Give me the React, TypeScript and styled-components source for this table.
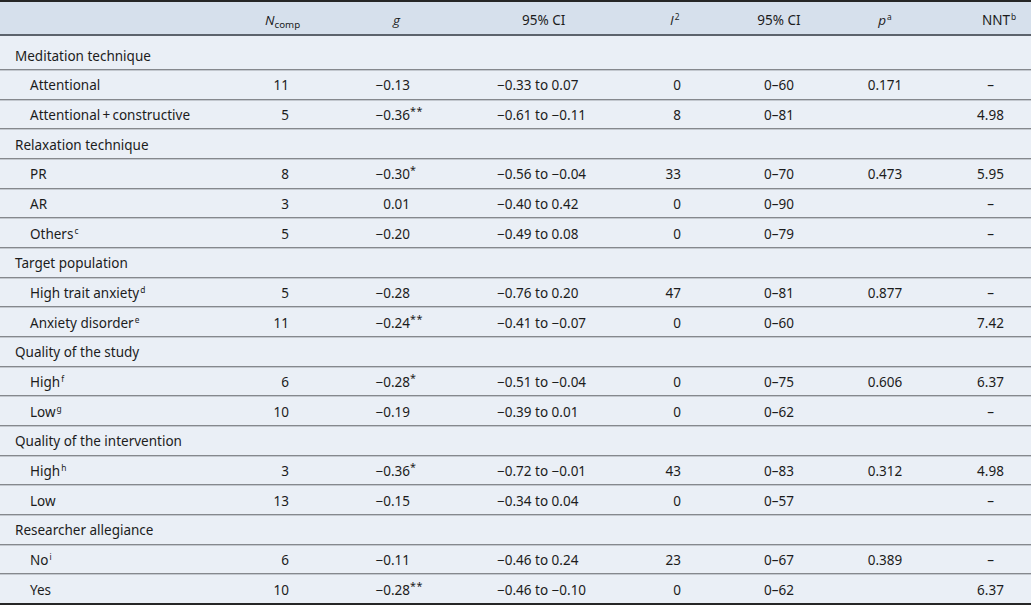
import React from "react";
import styled, { createGlobalStyle } from "styled-components";

const Global = createGlobalStyle`
  html, body { margin: 0; padding: 0; background: #eaeff6; }
  body { font-family: "Noto Sans", "Open Sans", sans-serif; }
`;

const Table = styled.table`
  width: 1031px;
  table-layout: fixed;
  border-collapse: separate;
  border-spacing: 0;
  background: #eaeff6;
  color: #1c1c1c;
  font-family: "Noto Sans", "Open Sans", sans-serif;
  font-size: 13.5px;
`;

const HeadCell = styled.th<{ $pl?: number; $pr?: number; $align?: "left" | "center" | "right" }>`
  box-sizing: border-box;
  height: 36px;
  padding: 4px ${(p) => p.$pr ?? 0}px 0 ${(p) => p.$pl ?? 0}px;
  text-align: ${(p) => p.$align ?? "left"};
  font-weight: 400;
  white-space: nowrap;
  background: #d6e0ec;
  border-top: 2px solid #262626;
  border-bottom: 2px solid #5c636c;
  vertical-align: middle;
`;

const Cell = styled.td<{
  $align?: "left" | "center" | "right";
  $pl?: number;
  $pr?: number;
  $first?: boolean;
  $last?: boolean;
}>`
  box-sizing: border-box;
  height: ${(p) => (p.$first ? "34px" : p.$last ? "31px" : "29.67px")};
  padding: ${(p) => (p.$first ? "6px" : "2px")} ${(p) => p.$pr ?? 0}px 0 ${(p) => p.$pl ?? 0}px;
  text-align: ${(p) => p.$align ?? "left"};
  white-space: nowrap;
  vertical-align: middle;
  border-bottom: ${(p) => (p.$last ? "2px solid #262626" : "1px solid #85888d")};
  box-shadow: ${(p) => (p.$first ? "none" : "inset 0 1px 0 #c3c8cf")};
`;

const Italic = styled.i`
  font-family: "Open Sans", "DejaVu Sans", sans-serif;
  font-style: italic;
`;

const Sup = styled.sup`
  font-size: 0.62em;
  line-height: 0;
  vertical-align: 0.6em;
  margin-left: 1px;
`;

const Stars = styled.sup`
  font-size: 0.8em;
  line-height: 0;
  vertical-align: 0.45em;
  letter-spacing: 0.5px;
`;

const Sub = styled.sub`
  font-size: 0.72em;
  line-height: 0;
  vertical-align: -0.3em;
`;

const GNum = styled.span`
  display: inline-block;
  width: 50px;
  text-align: right;
`;

type Row =
  | { section: string }
  | {
      label: string;
      sup?: string;
      n: string;
      g: string;
      stars?: string;
      ci: string;
      i2: string;
      ci2: string;
      p?: string;
      nnt: string;
    };

const rows: Row[] = [
  { section: "Meditation technique" },
  { label: "Attentional", n: "11", g: "−0.13", ci: "−0.33 to 0.07", i2: "0", ci2: "0–60", p: "0.171", nnt: "–" },
  { label: "Attentional\u2009+\u2009constructive", n: "5", g: "−0.36", stars: "**", ci: "−0.61 to −0.11", i2: "8", ci2: "0–81", nnt: "4.98" },
  { section: "Relaxation technique" },
  { label: "PR", n: "8", g: "−0.30", stars: "*", ci: "−0.56 to −0.04", i2: "33", ci2: "0–70", p: "0.473", nnt: "5.95" },
  { label: "AR", n: "3", g: "0.01", ci: "−0.40 to 0.42", i2: "0", ci2: "0–90", nnt: "–" },
  { label: "Others", sup: "c", n: "5", g: "−0.20", ci: "−0.49 to 0.08", i2: "0", ci2: "0–79", nnt: "–" },
  { section: "Target population" },
  { label: "High trait anxiety", sup: "d", n: "5", g: "−0.28", ci: "−0.76 to 0.20", i2: "47", ci2: "0–81", p: "0.877", nnt: "–" },
  { label: "Anxiety disorder", sup: "e", n: "11", g: "−0.24", stars: "**", ci: "−0.41 to −0.07", i2: "0", ci2: "0–60", nnt: "7.42" },
  { section: "Quality of the study" },
  { label: "High", sup: "f", n: "6", g: "−0.28", stars: "*", ci: "−0.51 to −0.04", i2: "0", ci2: "0–75", p: "0.606", nnt: "6.37" },
  { label: "Low", sup: "g", n: "10", g: "−0.19", ci: "−0.39 to 0.01", i2: "0", ci2: "0–62", nnt: "–" },
  { section: "Quality of the intervention" },
  { label: "High", sup: "h", n: "3", g: "−0.36", stars: "*", ci: "−0.72 to −0.01", i2: "43", ci2: "0–83", p: "0.312", nnt: "4.98" },
  { label: "Low", n: "13", g: "−0.15", ci: "−0.34 to 0.04", i2: "0", ci2: "0–57", nnt: "–" },
  { section: "Researcher allegiance" },
  { label: "No", sup: "i", n: "6", g: "−0.11", ci: "−0.46 to 0.24", i2: "23", ci2: "0–67", p: "0.389", nnt: "–" },
  { label: "Yes", n: "10", g: "−0.28", stars: "**", ci: "−0.46 to −0.10", i2: "0", ci2: "0–62", nnt: "6.37" },
];

const widths = [245, 85, 130, 160, 100, 110, 120, 81];

export default function App() {
  return (
    <>
      <Global />
      <Table>
        <colgroup>
          {widths.map((w, i) => (
            <col key={i} style={{ width: w }} />
          ))}
        </colgroup>
        <thead>
          <tr>
            <HeadCell $pl={15}></HeadCell>
            <HeadCell $pl={20}>
              <Italic>N</Italic>
              <Sub>comp</Sub>
            </HeadCell>
            <HeadCell $pl={63}>
              <Italic>g</Italic>
            </HeadCell>
            <HeadCell $pl={62}>95% CI</HeadCell>
            <HeadCell $pl={50}>
              <Italic>I</Italic>
              <Sup>2</Sup>
            </HeadCell>
            <HeadCell $align="center" $pl={8}>95% CI</HeadCell>
            <HeadCell $align="center" $pr={10}>
              <Italic>p</Italic>
              <Sup>a</Sup>
            </HeadCell>
            <HeadCell $pl={32}>
              NNT<Sup>b</Sup>
            </HeadCell>
          </tr>
        </thead>
        <tbody>
          {rows.map((r, idx) => {
            const first = idx === 0;
            const last = idx === rows.length - 1;
            if ("section" in r) {
              return (
                <tr key={idx}>
                  <Cell $pl={15} $first={first} $last={last} colSpan={8}>
                    {r.section}
                  </Cell>
                </tr>
              );
            }
            return (
              <tr key={idx}>
                <Cell $pl={30} $first={first} $last={last}>
                  {r.label}
                  {r.sup && <Sup>{r.sup}</Sup>}
                </Cell>
                <Cell $align="right" $pr={41} $first={first} $last={last}>
                  {r.n}
                </Cell>
                <Cell $pl={30} $first={first} $last={last}>
                  <GNum>{r.g}</GNum>
                  {r.stars && <Stars>{r.stars}</Stars>}
                </Cell>
                <Cell $pl={37} $first={first} $last={last}>
                  {r.ci}
                </Cell>
                <Cell $align="right" $pr={39} $first={first} $last={last}>
                  {r.i2}
                </Cell>
                <Cell $align="center" $pl={8} $first={first} $last={last}>
                  {r.ci2}
                </Cell>
                <Cell $align="center" $pr={10} $first={first} $last={last}>
                  {r.p ?? ""}
                </Cell>
                <Cell $align="center" $first={first} $last={last}>
                  {r.nnt}
                </Cell>
              </tr>
            );
          })}
        </tbody>
      </Table>
    </>
  );
}
